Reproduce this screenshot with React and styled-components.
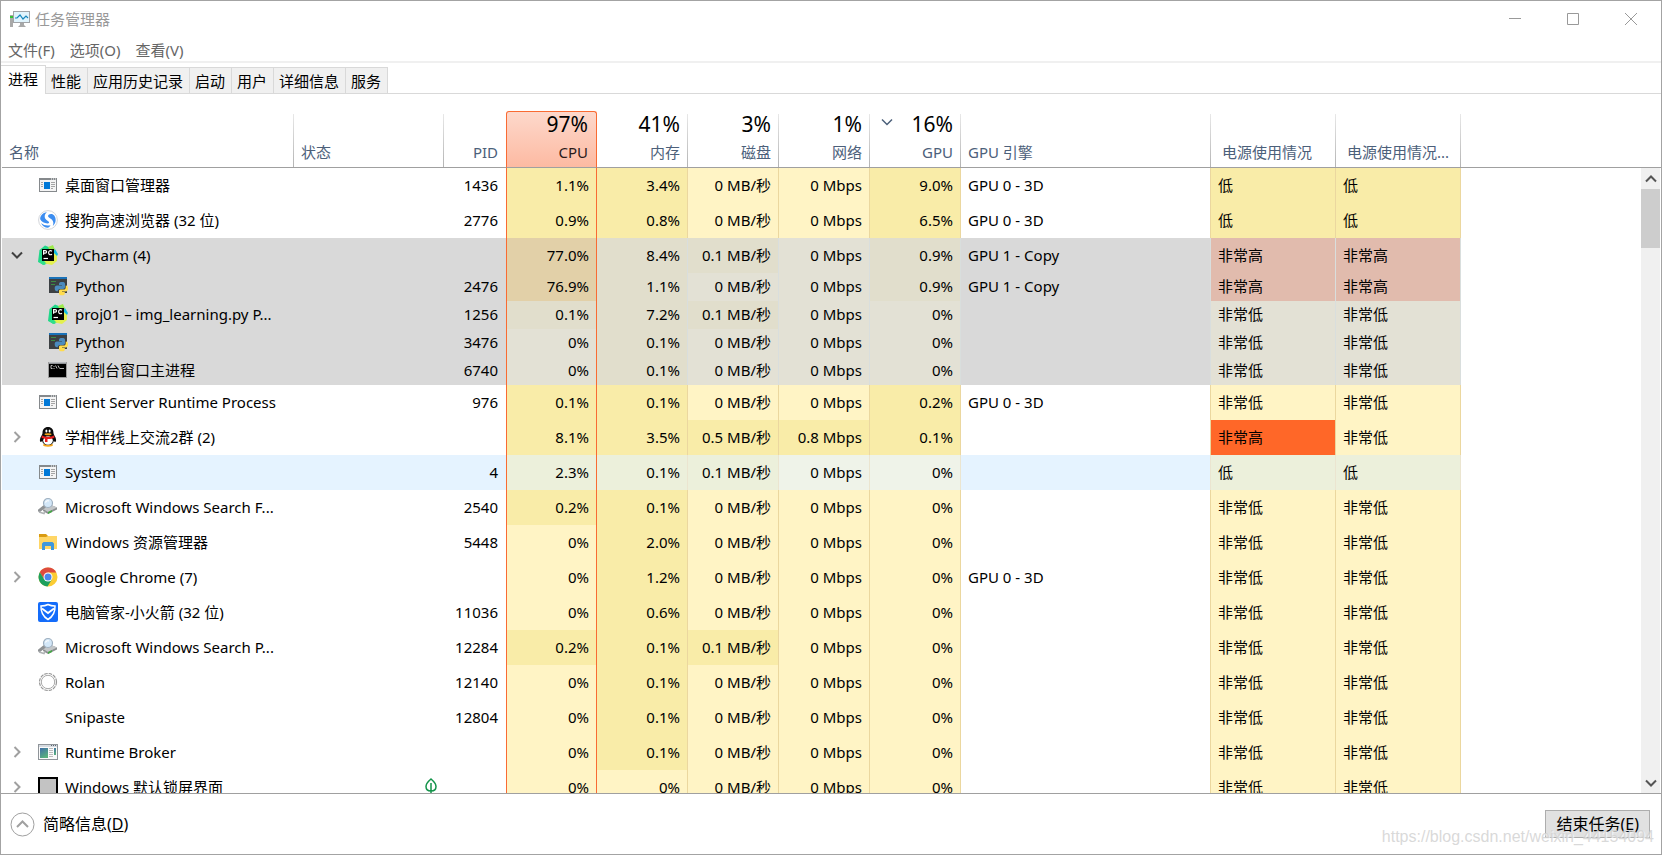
import React, { Fragment } from 'react'
import styled, { createGlobalStyle, css } from 'styled-components'

const GlobalStyle = createGlobalStyle`
  *, *::before, *::after {
    box-sizing: border-box;
  }
  body {
    margin: 0;
    background: #ffffff;
    color: #000000;
    font: 15px/20px "Noto Sans", "Noto Sans CJK SC", sans-serif;
  }
  button {
    margin: 0;
    padding: 0;
    border: 0;
    background: none;
    color: inherit;
    font: inherit;
  }
`

const Window = styled.div`
  position: relative;
  display: flex;
  flex-direction: column;
  height: 100vh;
  overflow: hidden;
  border: 1px solid #a3a3a3;
  background: #ffffff;
`

const TitleBar = styled.header`
  display: flex;
  align-items: center;
  height: 36px;
  padding: 0 1px 0 9px;
  color: #999999;
`

const Title = styled.h1`
  flex: 1;
  margin: 0 0 0 5px;
  font-size: 15px;
  font-weight: 400;
`

const CaptionButton = styled.button`
  display: flex;
  align-items: center;
  justify-content: center;
  width: 58px;
  height: 34px;
`

const MenuBar = styled.nav`
  display: flex;
  gap: 15px;
  height: 26px;
  padding: 3px 7px;
  border-bottom: 2px solid #f0f0f0;
  color: #666666;
  button {
    line-height: 20px;
  }
`

const TabList = styled.div`
  display: flex;
  align-items: flex-end;
  height: 31px;
  border-bottom: 1px solid #d9d9d9;
`

const Tab = styled.button`
  height: 26px;
  padding: 0 6px 0 5px;
  border: 1px solid #d9d9d9;
  border-width: 1px 1px 0 0;
  background: #f0f0f0;
  line-height: 24px;
  ${ ({ $active }) => $active && css`
    height: 29px;
    margin-bottom: -1px;
    padding: 0 7px 3px;
    background: #ffffff;
  ` }
`

const Main = styled.main`
  display: grid;
  flex: 1;
  grid-template-columns: minmax(0, 1fr) 20px;
  grid-template-rows: 57px minmax(0, 1fr);
  min-height: 0;
  margin-top: 17px;
  padding-left: 1px;
  border-bottom: 1px solid #a0a0a0;
`

const Viewport = styled.div`
  grid-area: 1 / 1 / 3 / 3;
  overflow: hidden;
`

const Table = styled.table`
  width: 100%;
  border-spacing: 0;
  table-layout: fixed;
`

const HeadCell = styled.th`
  height: 57px;
  padding: 0;
  border-bottom: 1px solid #a0a0a0;
  background: ${ ({ $divider }) => $divider ? 'linear-gradient(#e8e8e8, #b4b4b4) right bottom / 1px 53px no-repeat' : 'none' };
  color: #4c607a;
  font-weight: 400;
  vertical-align: bottom;
  ${ ({ $hot }) => $hot && css`
    border: 1px solid #f96b33;
    border-bottom-color: #a0a0a0;
    border-radius: 3px 3px 0 0;
    background: linear-gradient(#fdd8cb, #fdbaa2);
    color: #2a1a1a;
  ` }
`

const HeadButton = styled.button`
  display: grid;
  grid-template-rows: 24px 27px;
  row-gap: 3px;
  width: 100%;
  height: 55px;
  padding: 0 8px 1px ${ ({ $inset }) => $inset || 7 }px;
  line-height: 27px;
  text-align: ${ ({ $right }) => $right ? 'right' : 'left' };
  white-space: nowrap;
`

const Total = styled.span`
  display: flex;
  align-items: center;
  justify-content: flex-end;
  color: #000000;
  font-size: 21px;
  line-height: 24px;
  svg {
    margin: 0 auto 4px 4px;
  }
`

const heat = {
  plain: { low: '#fff4c5', mid: '#f9eca8', warm: '#f9eca8', high: '#ff6728' },
  selected: { low: '#e3e1d5', mid: '#e1decc', warm: '#e2d0a8', high: '#e1bbad' },
  hover: { low: '#eff3e9', mid: '#ecf0db', warm: '#ecf0db', high: '#ecf0db' },
}
const rowColor = { plain: '#ffffff', selected: '#d9d9d9', hover: '#e5f3ff' }
const gridColor = { plain: '#ebd79f', selected: '#d9dedd', hover: '#ebe5d0' }

const Row = styled.tr`
  height: ${ ({ $child }) => $child ? 28 : 35 }px;
  background: ${ ({ $mode }) => rowColor[$mode] };
`

const Cell = styled.td`
  padding: 0 7px 2px;
  text-align: ${ ({ $right }) => $right ? 'right' : 'left' };
  white-space: nowrap;
`

const PidCell = styled(Cell)`
  padding-right: 8px;
`

const HeatCell = styled(Cell)`
  border-right: 1px solid ${ ({ $mode }) => gridColor[$mode] };
  background: ${ ({ $mode, $level }) => heat[$mode][$level] };
  ${ ({ $sorted }) => $sorted && css`
    border-right-color: #f96b33;
    border-left: 1px solid #f96b33;
  ` }
`

const EngineCell = styled(Cell)`
  border-right: 1px solid ${ ({ $mode }) => gridColor[$mode] };
`

const NameCell = styled(Cell)`
  padding: 0 0 2px;
`

const RestCell = styled.td`
  background: #ffffff;
`

const NameBox = styled.div`
  display: flex;
  align-items: center;
  padding-left: ${ ({ $child }) => $child ? 10 : 0 }px;
`

const Expander = styled.span`
  display: flex;
  align-items: center;
  justify-content: center;
  width: 36px;
  height: 24px;
  padding-right: 7px;
`

const IconBox = styled.span`
  display: flex;
  width: 20px;
  height: 20px;
  margin-right: 7px;
`

const StatusBox = styled.div`
  display: flex;
  justify-content: flex-end;
`

const Scrollbar = styled.div`
  display: flex;
  grid-area: 2 / 2 / 3 / 3;
  flex-direction: column;
  margin-right: 1px;
  background: #f0f0f0;
`

const ScrollButton = styled.button`
  display: flex;
  align-items: center;
  justify-content: center;
  height: 21px;
`

const Thumb = styled.div`
  height: 59px;
  margin-bottom: auto;
  background: #cdcdcd;
`

const Footer = styled.footer`
  display: flex;
  align-items: center;
  justify-content: space-between;
  height: 60px;
  padding: 0 11px 0 9px;
  font-size: 16px;
`

const DetailsButton = styled.button`
  display: flex;
  align-items: center;
  gap: 8px;
`

const EndButton = styled.button`
  height: 28px;
  padding: 0 10px;
  border: 1px solid #adadad;
  background: #e1e1e1;
  line-height: 26px;
`

const Watermark = styled.div`
  position: absolute;
  right: 7px;
  bottom: 7px;
  color: rgba(210, 210, 210, 0.85);
  font: 16px/20px "Liberation Sans", sans-serif;
  text-shadow: 1px 1px 1px rgba(255, 255, 255, 0.8);
  pointer-events: none;
`

const Chevron = ({ d, color = '#a0a0a0', width = 2 }) => (
  <svg width="12" height="12" viewBox="0 0 12 12" fill="none" stroke={ color } strokeWidth={ width }>
    <path d={ d } />
  </svg>
)

const RIGHT = 'M3.5 1 8.5 6 3.5 11'
const DOWN = 'M1 3.5 6 8.5 11 3.5'
const UP = 'M1 8.5 6 3.5 11 8.5'

const TaskManagerIcon = () => (
  <svg width="20" height="18" viewBox="0 0 20 18">
    <rect x="0" y="5" width="3" height="12" fill="#a9a9a9" />
    <rect x="0" y="6" width="3" height="2" fill="#35c235" />
    <rect x="3.5" y="1.5" width="16" height="11" fill="#e0f4fd" stroke="#a0a4a8" />
    <path d="M5 8h2l3-3 3 4 3-3 2 2" fill="none" stroke="#1687bd" strokeWidth="1.2" />
    <path d="M10 13h4v2l2 2H8l2-2z" fill="#a8a8a8" />
  </svg>
)

const AppIcon = () => (
  <svg width="20" height="20" viewBox="0 0 20 20">
    <rect x="1.5" y="3.5" width="17" height="13" fill="#f4f4f4" stroke="#85898c" />
    <path d="M1 4h18" stroke="#85898c" strokeWidth="2" />
    <path d="M13 4h1M15 4h1M17 4h1" stroke="#ffffff" />
    <rect x="6" y="7" width="6" height="7" fill="#0078d7" />
    <path d="M3 7.5h2M3 9.5h2M3 11.5h2M13 7.5h4M13 9.5h4M13 11.5h4M13 13.5h2" stroke="#a5a5a5" />
  </svg>
)

const SogouIcon = () => (
  <svg width="20" height="20" viewBox="0 0 20 20">
    <circle cx="10" cy="10" r="9.4" fill="#ffffff" stroke="#d3d6da" />
    <path d="M9 2.300C4.500 2.700 2 6 2.200 9.300c1.300 2.700 4 4 7.300 4.200 1.500 0 2-.8 1.300-1.700C9.500 10.300 6.700 9.500 6.700 6.500c0-2 1-3.300 2.300-4.200z" fill="#3c8df0" />
    <path d="M11 4.500c1.500-1 3.500-.8 5 .8 2.500 3 2.200 8-1.200 10.700 1-2.500.8-5-1.300-6.700-1.500-1.200-3.200-1.800-3.500-3 0-.7.300-1.300 1-1.800z" fill="#3c8df0" />
    <path d="M3 13c2.500 2.300 6 3 9.500 2.200-.5 1.300-1.300 2-2.500 2.600-3 0-5.700-1.800-7-4.800z" fill="#3c8df0" />
  </svg>
)

const PyCharmIcon = () => (
  <svg width="20" height="20" viewBox="0 0 20 20">
    <path d="M1.500 5 7 .5l6 2.500-1 14-6 3-6-3z" fill="#21d789" />
    <path d="m14 3 3 1 3 5-2 4-4-3z" fill="#14bfe0" />
    <path d="m10 2 5-2 2 5-5 1z" fill="#9bea4c" />
    <path d="m16 8 3 3v5l-5 4-9-2 2-4z" fill="#e3f04f" />
    <path d="m1 17 4-2 3 3-3 2z" fill="#2ee08a" />
    <rect x="4" y="4" width="12" height="12" fill="#000000" />
    <path d="M5.600 9.700V5.600h1.700a1.200 1.200 0 0 1 0 2.500H5.600M14 6.200c-1.500-1.200-3.400-.6-3.400 1.500s2 2.500 3.400 1.500" fill="none" stroke="#ffffff" strokeWidth="1.200" />
    <path d="M5.500 13.500h4.500" stroke="#ffffff" strokeWidth="1.200" />
  </svg>
)

const PythonIcon = () => (
  <svg width="20" height="20" viewBox="0 0 20 20">
    <rect x="1" y="1" width="18" height="16" fill="#3c4043" />
    <rect x="1" y="1" width="18" height="2" fill="#1a72b8" />
    <path d="M3 5.500h5M3 8.500h4" stroke="#3d8b45" />
    <path d="M14 6c2.200 0 3 .6 3 2v3c0 1.300-.7 2-2 2h-3c-1.500 0-2.200 1-2.200 2.200H9c-1.500 0-2.300-1.200-2.300-3S7.500 9.500 9 9.500h5V9h-3V8c0-1.400 1-2 3-2z" fill="#4b8bbe" />
    <path d="M17.700 9.500H18c1.500 0 2 1.300 2 3s-.7 2.900-2 2.900h-4v.6h2.800v1.400c0 1.200-1 1.900-2.800 1.900-2 0-3-.7-3-1.900V15c0-1 .7-1.500 1.600-1.500h3c1.400 0 2.100-1 2.100-2.100z" fill="#ffdc4d" />
  </svg>
)

const ConsoleIcon = () => (
  <svg width="20" height="20" viewBox="0 0 20 20">
    <rect x="0.500" y="2.500" width="18" height="15" fill="#000000" stroke="#9b9b9b" />
    <path d="M1 3h17" stroke="#c2c6cb" strokeWidth="1.500" />
    <path d="M4.500 5.500H3v3h1.500M6 6v1M6 8v1M7.500 5.500l1.500 3M10 5.500l1.500 3M12 8.500h4" fill="none" stroke="#c9c9c9" strokeWidth="0.900" />
  </svg>
)

const QQIcon = () => (
  <svg width="20" height="20" viewBox="0 0 20 20">
    <path d="M5 18c0-1 3-1.500 5-1.500s5 .5 5 1.500-2 1.700-5 1.700S5 19 5 18z" fill="#f5a51b" />
    <path d="M10 0c3.500 0 5.500 2.500 5.500 6 0 1.500 1 2.500 2 4.500 1 2.300.7 4.500-.3 4.500-.5 0-1-.8-1.300-1.300-.6 3-2.700 4.300-5.900 4.300s-5.300-1.300-5.900-4.300c-.3.500-.8 1.300-1.300 1.300-1 0-1.300-2.200-.3-4.500 1-2 2-3 2-4.500 0-3.500 2-6 5.500-6z" fill="#0c0c0c" />
    <ellipse cx="10" cy="13.500" rx="4.800" ry="4.300" fill="#ffffff" />
    <path d="M4 8.500c3 1.700 9 1.700 12 0l.5 2c-2 1.300-4.500 1.700-7 1.600v3H7v-3.300c-1.500-.3-3-.7-3.500-1.300z" fill="#e61c1c" />
    <ellipse cx="8.400" cy="4" rx="1" ry="1.500" fill="#ffffff" />
    <ellipse cx="11.600" cy="4" rx="1" ry="1.500" fill="#ffffff" />
    <ellipse cx="10" cy="7.200" rx="3.500" ry="1" fill="#f5a51b" />
  </svg>
)

const SearchIcon = () => (
  <svg width="20" height="20" viewBox="0 0 20 20">
    <path d="m6 9 7-1 6 2.500v2L10 17l-5-3z" fill="#8a8d8f" />
    <path d="m6 9 7-1 6 2.500-9 4.500-5-3z" fill="#c3c6c8" />
    <path d="m10 15 4-2v2l-4 2z" fill="#45a845" />
    <path d="m6.500 9.500-5 4" stroke="#8f9294" strokeWidth="3" strokeLinecap="round" />
    <path d="m1 15 5 1.500 1-2" fill="none" stroke="#b0b3b5" strokeWidth="1.500" />
    <circle cx="10" cy="6" r="4.500" fill="#d3e7f8" stroke="#9fb0c0" strokeWidth="1.200" />
    <path d="M7.500 5.500c.5-1.500 2-2 3.500-1.500" fill="none" stroke="#ffffff" strokeWidth="1.200" />
  </svg>
)

const ExplorerIcon = () => (
  <svg width="20" height="20" viewBox="0 0 20 20">
    <path d="M1 2h7l2 2v3H1z" fill="#d99b12" />
    <path d="M1 5h7l2-1h9v13H1z" fill="#ffd666" />
    <path d="M4 18v-6.500L5.500 10h9l1.500 1.500V18h-3v-4H7v4z" fill="#3f97dd" />
  </svg>
)

const ChromeIcon = () => (
  <svg width="20" height="20" viewBox="0 0 20 20">
    <circle cx="10" cy="10" r="9.500" fill="#fbcc34" />
    <path d="M1.800 5.200A9.500 9.500 0 0 1 18.300 5.500H10L5.900 12z" fill="#dd4b3e" />
    <path d="M1.800 5.200A9.500 9.500 0 0 0 9.500 19.500L14 12.200 6 12z" fill="#1da05e" />
    <circle cx="10" cy="10" r="4.500" fill="#ffffff" />
    <circle cx="10" cy="10" r="3.500" fill="#4a86ec" />
  </svg>
)

const GuardIcon = () => (
  <svg width="20" height="20" viewBox="0 0 20 20">
    <rect width="20" height="20" rx="2" fill="#146cfa" />
    <path d="M10 2.500c2 1 4.500 1.500 7 1.500.3 6-2 10.500-7 13.500C5 14.500 2.700 10 3 4c2.500 0 5-.5 7-1.500z" fill="none" stroke="#ffffff" strokeWidth="1.500" />
    <path d="m4 6.500 6 4.500 6-4.500" fill="none" stroke="#ffffff" strokeWidth="1.800" />
  </svg>
)

const RolanIcon = () => (
  <svg width="20" height="20" viewBox="0 0 20 20" fill="none">
    <circle cx="10" cy="10" r="8.500" stroke="#969696" strokeWidth="1.200" strokeDasharray="3.500 1" />
    <circle cx="10" cy="10" r="6.700" stroke="#a8a8a8" />
  </svg>
)

const BrokerIcon = () => (
  <svg width="20" height="20" viewBox="0 0 20 20">
    <defs>
      <linearGradient id="broker" x1="0" y1="0" x2="0.500" y2="1">
        <stop offset="0" stopColor="#3e6ca8" />
        <stop offset="1" stopColor="#58b07d" />
      </linearGradient>
    </defs>
    <rect x="0.500" y="2.500" width="19" height="15" fill="#fafafa" stroke="#8f9499" />
    <path d="M1 4h18" stroke="#d5dae0" strokeWidth="2" />
    <path d="M13 3.500h1M15 3.500h1M17 3.500h1" stroke="#5c6670" />
    <rect x="2" y="6" width="8" height="10" fill="url(#broker)" />
    <rect x="16" y="6" width="2" height="7" fill="url(#broker)" />
    <path d="M11 6.500h4M11 8.500h4M11 10.500h4M11 12.500h4M11 14.500h4" stroke="#bcbcbc" />
  </svg>
)

const LockIcon = () => (
  <svg width="20" height="20" viewBox="0 0 20 20">
    <rect x="1" y="1" width="18" height="18" fill="#c3c3c3" stroke="#000000" strokeWidth="2" />
  </svg>
)

const LeafIcon = () => (
  <svg width="12" height="18" viewBox="0 0 12 18" fill="none" stroke="#13934a" strokeWidth="1.500">
    <path d="M6 1c3 2.500 5 4.500 5 7.500S9 13 6 13 1 11.500 1 8.500 3 3.500 6 1zM6 5v12" />
  </svg>
)

const columns = [
  { label: '名称', width: 292, divider: true },
  { label: '状态', width: 150, divider: true },
  { label: 'PID', width: 62, right: true },
  { label: 'CPU', width: 91, right: true, total: '97%', hot: true },
  { label: '内存', width: 91, right: true, total: '41%', divider: true },
  { label: '磁盘', width: 91, right: true, total: '3%', divider: true },
  { label: '网络', width: 91, right: true, total: '1%', divider: true },
  { label: 'GPU', width: 91, right: true, total: '16%', divider: true, sorted: true },
  { label: 'GPU 引擎', width: 250, divider: true },
  { label: '电源使用情况', width: 125, divider: true, inset: 11 },
  { label: '电源使用情况...', width: 125, divider: true, inset: 11 },
]

// usage: cpu, memory, disk, network, gpu
const processes = [
  { name: '桌面窗口管理器', icon: AppIcon, pid: 1436, usage: ['1.1', '3.4', '0', '0', '9.0'], engine: 'GPU 0 - 3D', power: ['低', '低'] },
  { name: '搜狗高速浏览器 (32 位)', icon: SogouIcon, pid: 2776, usage: ['0.9', '0.8', '0', '0', '6.5'], engine: 'GPU 0 - 3D', power: ['低', '低'] },
  { name: 'PyCharm (4)', icon: PyCharmIcon, open: true, mode: 'selected', usage: ['77.0', '8.4', '0.1', '0', '0.9'], engine: 'GPU 1 - Copy', power: ['非常高', '非常高'] },
  { name: 'Python', icon: PythonIcon, child: true, mode: 'selected', pid: 2476, usage: ['76.9', '1.1', '0', '0', '0.9'], engine: 'GPU 1 - Copy', power: ['非常高', '非常高'] },
  { name: 'proj01 – img_learning.py P...', icon: PyCharmIcon, child: true, mode: 'selected', pid: 1256, usage: ['0.1', '7.2', '0.1', '0', '0'], power: ['非常低', '非常低'] },
  { name: 'Python', icon: PythonIcon, child: true, mode: 'selected', pid: 3476, usage: ['0', '0.1', '0', '0', '0'], power: ['非常低', '非常低'] },
  { name: '控制台窗口主进程', icon: ConsoleIcon, child: true, mode: 'selected', pid: 6740, usage: ['0', '0.1', '0', '0', '0'], power: ['非常低', '非常低'] },
  { name: 'Client Server Runtime Process', icon: AppIcon, pid: 976, usage: ['0.1', '0.1', '0', '0', '0.2'], engine: 'GPU 0 - 3D', power: ['非常低', '非常低'] },
  { name: '学相伴线上交流2群 (2)', icon: QQIcon, group: true, usage: ['8.1', '3.5', '0.5', '0.8', '0.1'], power: ['非常高', '非常低'] },
  { name: 'System', icon: AppIcon, mode: 'hover', pid: 4, usage: ['2.3', '0.1', '0.1', '0', '0'], power: ['低', '低'] },
  { name: 'Microsoft Windows Search F...', icon: SearchIcon, pid: 2540, usage: ['0.2', '0.1', '0', '0', '0'], power: ['非常低', '非常低'] },
  { name: 'Windows 资源管理器', icon: ExplorerIcon, pid: 5448, usage: ['0', '2.0', '0', '0', '0'], power: ['非常低', '非常低'] },
  { name: 'Google Chrome (7)', icon: ChromeIcon, group: true, usage: ['0', '1.2', '0', '0', '0'], engine: 'GPU 0 - 3D', power: ['非常低', '非常低'] },
  { name: '电脑管家-小火箭 (32 位)', icon: GuardIcon, pid: 11036, usage: ['0', '0.6', '0', '0', '0'], power: ['非常低', '非常低'] },
  { name: 'Microsoft Windows Search P...', icon: SearchIcon, pid: 12284, usage: ['0.2', '0.1', '0.1', '0', '0'], power: ['非常低', '非常低'] },
  { name: 'Rolan', icon: RolanIcon, pid: 12140, usage: ['0', '0.1', '0', '0', '0'], power: ['非常低', '非常低'] },
  { name: 'Snipaste', pid: 12804, usage: ['0', '0.1', '0', '0', '0'], power: ['非常低', '非常低'] },
  { name: 'Runtime Broker', icon: BrokerIcon, group: true, usage: ['0', '0.1', '0', '0', '0'], power: ['非常低', '非常低'] },
  { name: 'Windows 默认锁屏界面', icon: LockIcon, group: true, leaf: true, usage: ['0', '0', '0', '0', '0'], power: ['非常低', '非常低'] },
]

const units = ['%', '%', ' MB/秒', ' Mbps', '%']

const usageLevel = value => {
  if (Number(value) > 50) return 'warm'
  return Number(value) > 0 ? 'mid' : 'low'
}

const powerLevel = { '非常低': 'low', '低': 'mid', '非常高': 'high' }

const ProcessRow = ({ process }) => {
  const { name, icon: Icon, open, group, child, leaf, pid, usage, engine, power, mode = 'plain' } = process

  return (
    <Row $mode={ mode } $child={ child }>
      <NameCell>
        <NameBox $child={ child }>
          <Expander as={ open || group ? 'button' : 'span' } aria-label={ open || group ? name : undefined }>
            { open && <Chevron d={ DOWN } color="#404040" /> }
            { group && <Chevron d={ RIGHT } /> }
          </Expander>
          <IconBox>{ Icon && <Icon /> }</IconBox>
          { name }
        </NameBox>
      </NameCell>
      <Cell>{ leaf && <StatusBox><LeafIcon /></StatusBox> }</Cell>
      <PidCell $right>{ pid }</PidCell>
      {
        usage.map((value, i) => (
          <HeatCell key={ i } $right $mode={ mode } $level={ usageLevel(value) } $sorted={ i === 0 }>
            { value }{ units[i] }
          </HeatCell>
        ))
      }
      <EngineCell $mode={ mode }>{ engine }</EngineCell>
      {
        power.map((value, i) => (
          <HeatCell key={ i } $mode={ mode } $level={ powerLevel[value] }>{ value }</HeatCell>
        ))
      }
      <RestCell />
    </Row>
  )
}

const ProcessTable = () => (
  <Table>
    <colgroup>
      { columns.map((column, i) => <col key={ i } width={ column.width } />) }
      <col />
    </colgroup>
    <thead>
      <tr>
        {
          columns.map(({ label, right, total, hot, divider, sorted, inset }, i) => (
            <HeadCell key={ i } $hot={ hot } $divider={ divider }>
              <HeadButton $right={ right } $inset={ inset }>
                <Total>
                  { sorted && <Chevron d={ DOWN } color="#4c607a" width={ 1.5 } /> }
                  { total }
                </Total>
                <span>{ label }</span>
              </HeadButton>
            </HeadCell>
          ))
        }
        <HeadCell as="td" />
      </tr>
    </thead>
    <tbody>
      { processes.map((process, i) => <ProcessRow key={ i } process={ process } />) }
    </tbody>
  </Table>
)

const tabs = ['进程', '性能', '应用历史记录', '启动', '用户', '详细信息', '服务']

const App = () => (
  <Fragment>
    <GlobalStyle />
    <Window>
      <TitleBar>
        <TaskManagerIcon />
        <Title>任务管理器</Title>
        <CaptionButton aria-label="最小化">
          <svg width="12" height="12" stroke="#999999"><path d="M0 5.500h12" /></svg>
        </CaptionButton>
        <CaptionButton aria-label="最大化">
          <svg width="12" height="12" fill="none" stroke="#999999"><path d="M.5.500h11v11H.5z" /></svg>
        </CaptionButton>
        <CaptionButton aria-label="关闭">
          <svg width="12" height="12" stroke="#999999"><path d="m0 0 12 12M12 0 0 12" /></svg>
        </CaptionButton>
      </TitleBar>
      <MenuBar>
        <button>文件(F)</button>
        <button>选项(O)</button>
        <button>查看(V)</button>
      </MenuBar>
      <TabList role="tablist">
        {
          tabs.map((tab, i) => (
            <Tab key={ tab } role="tab" aria-selected={ i === 0 } $active={ i === 0 }>{ tab }</Tab>
          ))
        }
      </TabList>
      <Main>
        <Viewport>
          <ProcessTable />
        </Viewport>
        <Scrollbar>
          <ScrollButton aria-label="向上滚动"><Chevron d={ UP } color="#555555" /></ScrollButton>
          <Thumb />
          <ScrollButton aria-label="向下滚动"><Chevron d={ DOWN } color="#555555" /></ScrollButton>
        </Scrollbar>
      </Main>
      <Footer>
        <DetailsButton>
          <svg width="25" height="25" viewBox="0 0 25 25" fill="none" stroke="#a0a0a0">
            <circle cx="12.500" cy="12.500" r="11.500" />
            <path d="m7 15 5.500-5.500L18 15" strokeWidth="2" />
          </svg>
          <span>简略信息(<u>D</u>)</span>
        </DetailsButton>
        <EndButton>结束任务(<u>E</u>)</EndButton>
      </Footer>
      <Watermark>https://blog.csdn.net/weixin_44154094</Watermark>
    </Window>
  </Fragment>
)

export default App
